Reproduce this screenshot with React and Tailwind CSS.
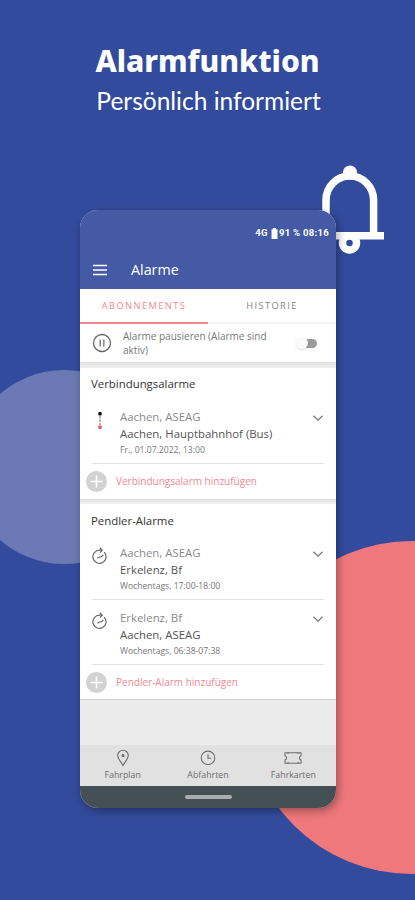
import React, { useState } from 'react';

const Bell = () => (
    <svg className="absolute left-[316px] top-[160px]" width="76" height="100" viewBox="316 160 76 100" fill="none">
        <circle cx="350" cy="172.500" r="7" fill="#fff" />
        <path d="M326 236V200a23.800 24 0 0 1 47.600 0V236" stroke="#fff" strokeWidth="7.500" />
        <path d="M323 235.800H384" stroke="#fff" strokeWidth="7.500" />
        <circle cx="349.500" cy="243" r="7" fill="#324b9c" stroke="#fff" strokeWidth="7.500" />
    </svg>
);

const Chevron = () => (
    <svg className="mt-[6px] shrink-0" width="12" height="8" viewBox="0 0 12 8" fill="none" stroke="#777" strokeWidth="1.2">
        <path d="M1.500 1.800 6 6.100l4.500-4.300" />
    </svg>
);

const RouteIcon = () => (
    <svg width="16" height="20" viewBox="0 0 16 20" fill="none">
        <path d="M8 5v9" stroke="#aaa" strokeWidth="1.800" strokeDasharray="2.500 1" />
        <rect x="6.300" y="1" width="3.400" height="3.400" rx="1" fill="#111" />
        <rect x="6.300" y="14.500" width="3.400" height="3.400" rx="1" fill="#ee5560" />
    </svg>
);

const RepeatIcon = () => (
    <svg width="16" height="18" viewBox="0 0 16 18" fill="none" stroke="#686868" strokeWidth="1.200">
        <path d="M12.200 5.200A6.600 6.600 0 1 1 7.800 3.200H10" />
        <path d="M7.800.8 10.300 3.200 7.800 5.600" />
        <path d="M5.400 11.300 7.300 10H9L11.400 8" />
    </svg>
);

const PauseIcon = () => (
    <svg width="20" height="20" viewBox="0 0 20 20" fill="none" stroke="#686868" strokeWidth="1.300">
        <circle cx="10" cy="10" r="8.500" />
        <path d="M8.200 6.500v7M11.800 6.500v7" stroke="#888" strokeWidth="1.600" />
    </svg>
);

const PinIcon = () => (
    <svg width="18" height="18" viewBox="0 0 18 18" fill="none" stroke="#6d6d6d" strokeWidth="1.1">
        <path d="M9 16.500C7.200 13 3.700 9.800 3.700 6.500a5.300 5.300 0 0 1 10.600 0C14.300 9.800 10.800 13 9 16.500Z" />
        <circle cx="9" cy="6.600" r="1" fill="#6d6d6d" />
    </svg>
);

const ClockIcon = () => (
    <svg width="18" height="18" viewBox="0 0 18 18" fill="none" stroke="#6d6d6d" strokeWidth="1.1">
        <circle cx="9" cy="8.900" r="6.800" />
        <path d="M9 5.300V9.200h3.300" />
    </svg>
);

const TicketIcon = () => (
    <svg width="18" height="18" viewBox="0 0 18 18" fill="none" stroke="#6d6d6d" strokeWidth="1.1">
        <path d="M1 3.700H17V6.800a2.200 2.200 0 0 0 0 4.200V14.300H1V11a2.200 2.200 0 0 0 0-4.200Z" />
        <path d="M4 3.700v1.300M4 13v1.300M14 3.700v1.300M14 13v1.300" />
    </svg>
);

const Alarm = ({ icon, from, to, time }) => (
    <div className="flex h-[65px] items-start border-b border-[#e2e2e2] pt-[9px]">
        <div className="w-[28px] shrink-0 pt-[3px]">{icon}</div>
        <div className="flex-1 whitespace-nowrap">
            <div className="text-[11.400px] leading-[17px] text-[#8a8a8a]">{from}</div>
            <div className="text-[11.400px] leading-[17px] text-[#555]">{to}</div>
            <div className="text-[8.600px] leading-[16px] text-[#777]">{time}</div>
        </div>
        <Chevron />
    </div>
);

const AddButton = ({ label }) => (
    <button className="flex h-[35px] w-full items-center gap-[9px] pl-[6px] text-[10px] whitespace-nowrap text-[#f28795]">
        <svg width="21" height="21" viewBox="0 0 21 21" fill="none">
            <circle cx="10.500" cy="10.500" r="10.500" fill="#d2d2d2" />
            <path d="M10.500 4.500v12M4.500 10.500h12" stroke="#fff" strokeWidth="1.600" />
        </svg>
        {label}
    </button>
);

const navItems = [
    { label: 'Fahrplan', icon: <PinIcon /> },
    { label: 'Abfahrten', icon: <ClockIcon /> },
    { label: 'Fahrkarten', icon: <TicketIcon /> },
];

const App = () => {
    const [tab, setTab] = useState('abos');

    return (
        <div className="relative h-[900px] w-[415px] overflow-hidden bg-[#324b9c] font-['Open_Sans',sans-serif]">
            {/* Background shapes */}
            <div className="absolute top-[370px] left-[-33px] size-[194px] rounded-full bg-[#6b79b4]" />
            <div className="absolute top-[541px] left-[245px] size-[333px] rounded-full bg-[#ef787c]" />
            <Bell />

            <div className="relative flex flex-col items-center pt-[42px] whitespace-nowrap text-white">
                <h1 className="font-['Noto_Sans',sans-serif] text-[30px] leading-[38px] font-extrabold">Alarmfunktion</h1>
                <p className="ml-[2px] font-['Lato',sans-serif] text-[24.500px] leading-[42px] font-normal">Persönlich informiert</p>
            </div>

            {/* Phone */}
            <div className="relative mt-[88px] ml-[80px] flex h-[598px] w-[256px] flex-col overflow-hidden rounded-[18px] bg-[#ebebeb] shadow-[2px_3px_9px_rgba(0,0,0,0.35)]">
                <header className="h-[79px] shrink-0 bg-[#455aa5] text-white">
                    <div className="flex h-[46px] items-center justify-end pr-[7px] font-['Roboto',sans-serif] text-[9.500px] font-bold tracking-[0.3px] whitespace-nowrap">
                        <span>4G</span>
                        <svg className="mr-[1px] ml-[3px]" width="7" height="11" viewBox="0 0 7 11" fill="#fff">
                            <path d="M2 0h3v1.300h1.500V11H.5V1.300H2Z" />
                        </svg>
                        <span>91 % 08:16</span>
                    </div>
                    <div className="flex items-center pl-[13px]">
                        <svg width="14" height="12" viewBox="0 0 14 12" stroke="#fff" strokeWidth="1.400">
                            <path d="M0 1.500h14M0 6h14M0 10.500h14" />
                        </svg>
                        <span className="ml-[24px] text-[14.300px] leading-[27px]">Alarme</span>
                    </div>
                </header>

                <div className="flex h-[35px] shrink-0 bg-white text-[9.300px] tracking-[1.400px]">
                    <button
                        onClick={() => setTab('abos')}
                        className={`w-1/2 border-b-2 ${tab === 'abos' ? 'border-[#f0868c] text-[#f08a92]' : 'border-[#f3f3f3] text-[#858585]'}`}
                    >
                        ABONNEMENTS
                    </button>
                    <button
                        onClick={() => setTab('historie')}
                        className={`w-1/2 border-b-2 ${tab === 'historie' ? 'border-[#f0868c] text-[#f08a92]' : 'border-[#f3f3f3] text-[#858585]'}`}
                    >
                        HISTORIE
                    </button>
                </div>

                <div className="flex h-[38px] shrink-0 items-center bg-white pr-[19px] pl-[12px]">
                    <PauseIcon />
                    <p className="ml-[11px] flex-1 text-[10px] leading-[14px] whitespace-nowrap text-[#777]">
                        Alarme pausieren (Alarme sind<br />aktiv)
                    </p>
                    <div className="flex h-[9px] w-[20px] items-center rounded-full bg-[#9b9b9b]">
                        <div className="-ml-px size-[12px] shrink-0 rounded-full bg-[#fafafa] shadow-sm" />
                    </div>
                </div>

                <div className="h-[6px] shrink-0 bg-linear-to-b from-[#dedede] to-[#f2f2f2]" />

                <section className="h-[131px] shrink-0 bg-white">
                    <h2 className="h-[31px] pl-[11px] text-[11.400px] leading-[32px] text-[#333]">Verbindungsalarme</h2>
                    <div className="mr-[12px] ml-[12px]">
                        <Alarm icon={<RouteIcon />} from="Aachen, ASEAG" to="Aachen, Hauptbahnhof (Bus)" time="Fr., 01.07.2022, 13:00" />
                    </div>
                    <AddButton label="Verbindungsalarm hinzufügen" />
                </section>

                <div className="h-[5px] shrink-0 bg-linear-to-b from-[#dedede] to-[#f2f2f2]" />

                <section className="h-[196px] shrink-0 border-b border-[#cfcfcf] bg-white">
                    <h2 className="h-[31px] pl-[11px] text-[11.400px] leading-[33px] text-[#333]">Pendler-Alarme</h2>
                    <div className="mr-[12px] ml-[12px]">
                        <Alarm icon={<RepeatIcon />} from="Aachen, ASEAG" to="Erkelenz, Bf" time="Wochentags, 17:00-18:00" />
                        <Alarm icon={<RepeatIcon />} from="Erkelenz, Bf" to="Aachen, ASEAG" time="Wochentags, 06:38-07:38" />
                    </div>
                    <AddButton label="Pendler-Alarm hinzufügen" />
                </section>

                <nav className="mt-auto flex h-[41px] shrink-0 bg-[#e1e1e1] text-[8.800px] text-[#6d6d6d]">
                    {navItems.map((item) => (
                        <div key={item.label} className="flex flex-1 flex-col items-center pt-[4px]">
                            {item.icon}
                            <span className="leading-[16px]">{item.label}</span>
                        </div>
                    ))}
                </nav>

                <div className="flex h-[22px] shrink-0 items-center justify-center bg-[#455056]">
                    <div className="h-[4px] w-[47px] rounded-full bg-[#a7adb0]" />
                </div>
            </div>
        </div>
    );
};

export default App;
